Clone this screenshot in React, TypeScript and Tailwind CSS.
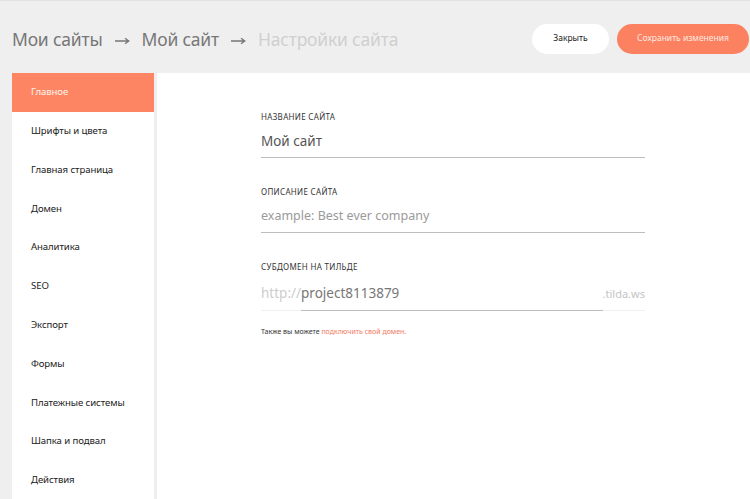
const NAV = [
  'Главное',
  'Шрифты и цвета',
  'Главная страница',
  'Домен',
  'Аналитика',
  'SEO',
  'Экспорт',
  'Формы',
  'Платежные системы',
  'Шапка и подвал',
  'Действия',
]

function Arrow() {
  return (
    <svg width="15" height="8" viewBox="0 0 15 8" className="mx-[12px] mt-[2px]">
      <path d="M0 4 H13.5 M10 1.2 L13.8 4 L10 6.8" stroke="#777" strokeWidth="1.3" fill="none" />
    </svg>
  )
}

function Field({ label, children, line = true }: { label: string; children: React.ReactNode; line?: boolean }) {
  return (
    <div className="mb-[30px]">
      <div className="text-[8px] tracking-[0.04em] uppercase text-[#333] leading-none">{label}</div>
      <div className={`mt-[8px] h-[29px] pb-[3px] flex items-center ${line ? 'border-b border-[#bdbdbd]' : ''}`}>{children}</div>
    </div>
  )
}

export default function App() {
  return (
    <div className="w-[750px] h-[499px] overflow-hidden bg-[#efefef] font-['Noto_Sans',sans-serif] flex flex-col">
      {/* header */}
      <div className="h-[73px] shrink-0 flex items-center pl-[12px] pt-[6px] border-t border-[#e2e2e2]">
        <div className="flex items-center text-[17.5px] tracking-[-0.2px] leading-none text-[#777]">
          <span>Мои сайты</span>
          <Arrow />
          <span>Мой сайт</span>
          <Arrow />
          <span className="text-[#cfcfcf]">Настройки сайта</span>
        </div>
        <div className="ml-auto flex items-center gap-[8px] mr-[1px] -mt-[3px]">
          <button className="w-[77px] h-[30px] rounded-full bg-white text-[8.5px] text-[#222]">Закрыть</button>
          <button className="w-[132px] h-[30px] rounded-full bg-[#fb8160] text-[8.5px] text-[#ffe9e1]">Сохранить изменения</button>
        </div>
      </div>

      <div className="flex flex-1 min-h-0 pl-[12px]">
        {/* sidebar */}
        <div className="w-[142px] bg-white shrink-0">
          {NAV.map((n, i) => (
            <div
              key={n}
              className={`h-[38.8px] flex items-center pl-[19px] text-[9.6px] tracking-[-0.1px] ${i === 0 ? 'bg-[#fd8563] text-[#fff4ee]' : 'text-[#222]'}`}
            >
              {n}
            </div>
          ))}
        </div>
        <div className="w-[3px] bg-[#efefef] shrink-0" />

        {/* content */}
        <div className="flex-1 bg-white pl-[104px] pt-[40px]">
          <div className="w-[384px]">
            <Field label="Название сайта">
              <span className="text-[13.5px] text-[#555]">Мой сайт</span>
            </Field>
            <Field label="Описание сайта">
              <span className="text-[12.5px] text-[#9a9a9a]">example: Best ever company</span>
            </Field>
            <div className="mb-[16px]">
              <div className="text-[8px] tracking-[0.04em] uppercase text-[#333] leading-none">Субдомен на тильде</div>
              <div className="mt-[9px] flex items-end w-full h-[31px] border-b border-[#f0f0f0]">
                <span className="text-[13.5px] text-[#cdcdcd] pb-[7px]">http://</span>
                <span className="flex-1 text-[13.5px] text-[#777] pb-[7px] border-b border-[#bdbdbd] -mb-px">project8113879</span>
                <span className="text-[11px] text-[#c4c4c4] pb-[8px]">.tilda.ws</span>
              </div>
            </div>
            <div className="text-[7px] text-[#333]">
              Также вы можете <span className="text-[#f07862]">подключить свой домен.</span>
            </div>
          </div>
        </div>
      </div>
    </div>
  )
}
